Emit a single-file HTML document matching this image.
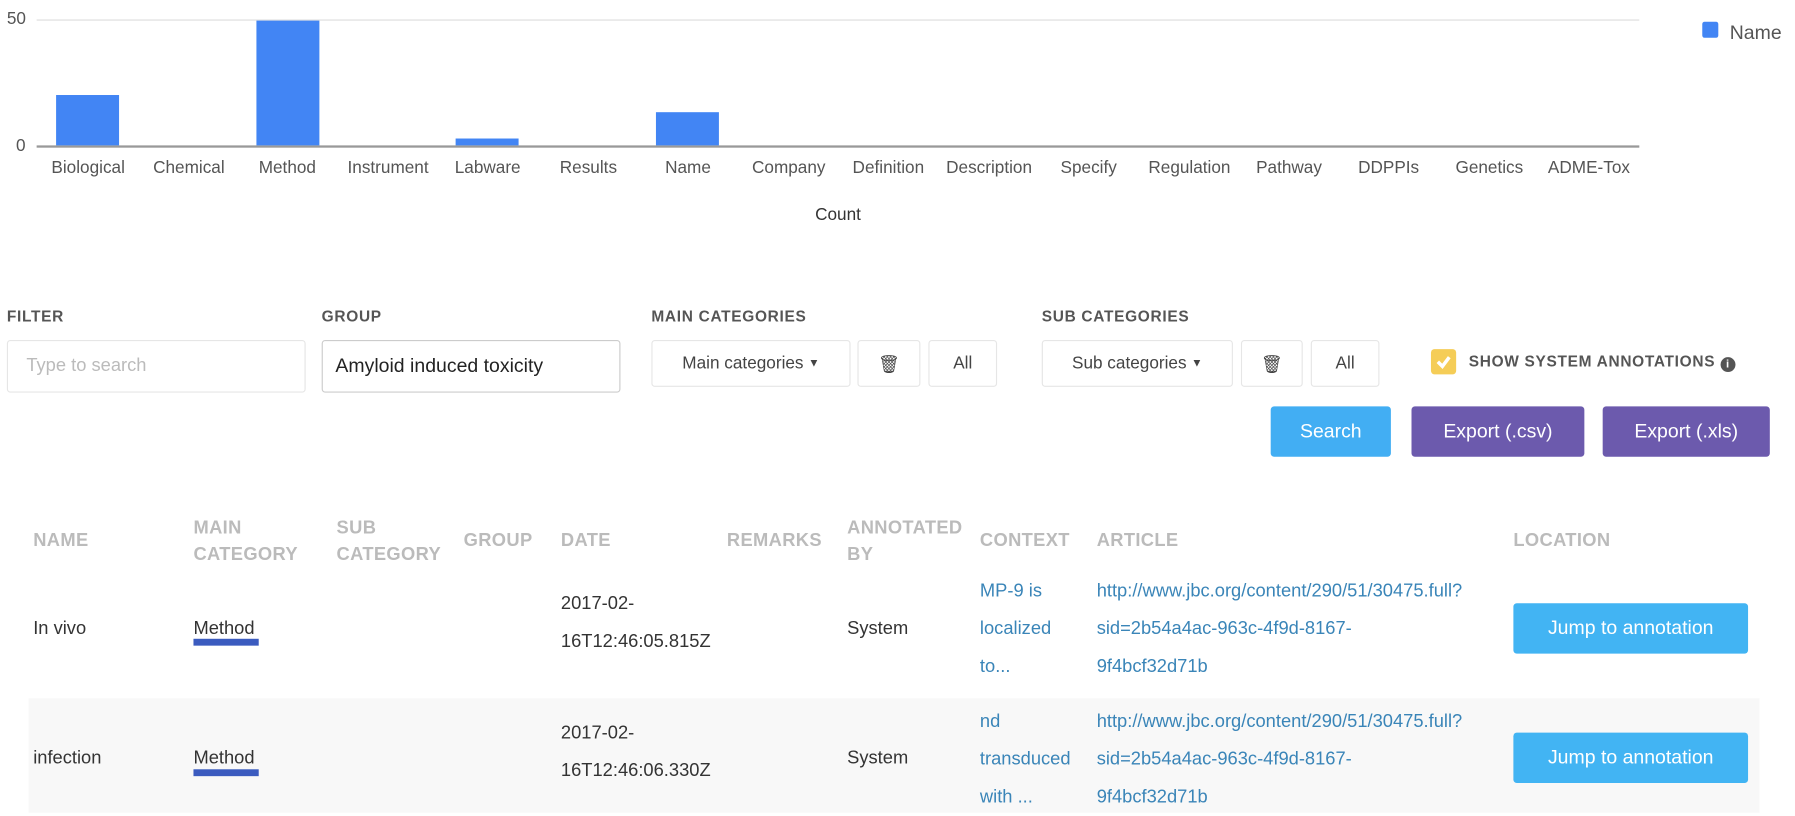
<!DOCTYPE html>
<html><head><meta charset="utf-8"><style>
html,body{margin:0;padding:0;background:#fff;width:1795px;height:812px;overflow:hidden}
#w{position:absolute;left:0;top:0;width:1568px;height:710px;transform:scale(1.14477);transform-origin:0 0;font-family:"Liberation Sans",sans-serif;color:#333}
.a{position:absolute;white-space:nowrap}
.ax{font-size:15px;color:#555}
.lab{font-size:13.5px;font-weight:bold;color:#555;letter-spacing:.6px}
.box{position:absolute;border:1px solid #e6e6e6;border-radius:3px;box-sizing:border-box;display:flex;align-items:center;justify-content:center;font-size:15px;color:#444}
.btn{position:absolute;border-radius:3px;color:#fff;font-size:17px;display:flex;align-items:center;justify-content:center}
.th{position:absolute;font-size:16px;font-weight:bold;color:#bbb;line-height:23px;letter-spacing:.3px}
.td{position:absolute;font-size:16px;color:#333;line-height:33px}
.lk{color:#3a85b8}
</style></head><body><div id="w">
<div class="a ax" style="left:6px;top:8px">50</div>
<div class="a ax" style="left:14px;top:119px">0</div>
<div class="a" style="left:32px;top:17px;width:1400px;height:1px;background:#ddd"></div>
<div class="a" style="left:32px;top:127px;width:1400px;height:2px;background:#999"></div>
<div class="a" style="left:49px;top:83px;width:55px;height:44px;background:#4285f4"></div>
<div class="a" style="left:224px;top:18px;width:55px;height:109px;background:#4285f4"></div>
<div class="a" style="left:398px;top:121px;width:55px;height:6px;background:#4285f4"></div>
<div class="a" style="left:573px;top:98px;width:55px;height:29px;background:#4285f4"></div>
<div class="a ax" style="left:0;top:138px;width:1568px;height:20px">
<span class="a" style="left:77px;transform:translateX(-50%)">Biological</span>
<span class="a" style="left:165px;transform:translateX(-50%)">Chemical</span>
<span class="a" style="left:251px;transform:translateX(-50%)">Method</span>
<span class="a" style="left:339px;transform:translateX(-50%)">Instrument</span>
<span class="a" style="left:426px;transform:translateX(-50%)">Labware</span>
<span class="a" style="left:514px;transform:translateX(-50%)">Results</span>
<span class="a" style="left:601px;transform:translateX(-50%)">Name</span>
<span class="a" style="left:689px;transform:translateX(-50%)">Company</span>
<span class="a" style="left:776px;transform:translateX(-50%)">Definition</span>
<span class="a" style="left:864px;transform:translateX(-50%)">Description</span>
<span class="a" style="left:951px;transform:translateX(-50%)">Specify</span>
<span class="a" style="left:1039px;transform:translateX(-50%)">Regulation</span>
<span class="a" style="left:1126px;transform:translateX(-50%)">Pathway</span>
<span class="a" style="left:1213px;transform:translateX(-50%)">DDPPIs</span>
<span class="a" style="left:1301px;transform:translateX(-50%)">Genetics</span>
<span class="a" style="left:1388px;transform:translateX(-50%)">ADME-Tox</span>
</div>
<div class="a ax" style="left:712px;top:179px;color:#333">Count</div>
<div class="a" style="left:1487px;top:19px;width:14px;height:14px;background:#4285f4;border-radius:2px"></div>
<div class="a" style="left:1511px;top:19px;font-size:17px;color:#555">Name</div>
<div class="a lab" style="left:6px;top:269px">FILTER</div>
<div class="a lab" style="left:281px;top:269px">GROUP</div>
<div class="a lab" style="left:569px;top:269px">MAIN CATEGORIES</div>
<div class="a lab" style="left:910px;top:269px">SUB CATEGORIES</div>
<div class="box" style="left:6px;top:297px;width:261px;height:46px;justify-content:flex-start;padding-left:16px;color:#bbb;font-size:16px">Type to search</div>
<div class="box" style="left:281px;top:297px;width:261px;height:46px;justify-content:flex-start;padding-left:11px;color:#222;font-size:17px;border-color:#ccc">Amyloid induced toxicity</div>
<div class="box" style="left:569px;top:297px;width:174px;height:41px">Main categories&nbsp;<span style="font-size:10px">&#9660;</span></div>
<div class="box" style="left:749px;top:297px;width:55px;height:41px">&#128465;</div>
<div class="box" style="left:811px;top:297px;width:60px;height:41px">All</div>
<div class="box" style="left:910px;top:297px;width:167px;height:41px">Sub categories&nbsp;<span style="font-size:10px">&#9660;</span></div>
<div class="box" style="left:1084px;top:297px;width:54px;height:41px">&#128465;</div>
<div class="box" style="left:1145px;top:297px;width:60px;height:41px">All</div>
<div class="a" style="left:1250px;top:305px;width:22px;height:22px;background:#f5cd57;border-radius:3px"><svg width="22" height="22"><path d="M6 11l4 4 6-8" stroke="#fff" stroke-width="3" fill="none"/></svg></div>
<div class="a lab" style="left:1283px;top:308px;color:#555">SHOW SYSTEM ANNOTATIONS <span style="display:inline-block;width:13px;height:13px;border-radius:50%;background:#555;color:#fff;font-size:10px;text-align:center;line-height:13px;vertical-align:-1px;letter-spacing:0">i</span></div>
<div class="btn" style="left:1110px;top:355px;width:105px;height:44px;background:#42aef3">Search</div>
<div class="btn" style="left:1233px;top:355px;width:151px;height:44px;background:#6c5aad">Export (.csv)</div>
<div class="btn" style="left:1400px;top:355px;width:146px;height:44px;background:#6c5aad">Export (.xls)</div>
<div class="th" style="left:29px;top:461px">NAME</div>
<div class="th" style="left:169px;top:450px">MAIN<br>CATEGORY</div>
<div class="th" style="left:294px;top:450px">SUB<br>CATEGORY</div>
<div class="th" style="left:405px;top:461px">GROUP</div>
<div class="th" style="left:490px;top:461px">DATE</div>
<div class="th" style="left:635px;top:461px">REMARKS</div>
<div class="th" style="left:740px;top:450px">ANNOTATED<br>BY</div>
<div class="th" style="left:856px;top:461px">CONTEXT</div>
<div class="th" style="left:958px;top:461px">ARTICLE</div>
<div class="th" style="left:1322px;top:461px">LOCATION</div>
<div class="a" style="left:25px;top:610px;width:1512px;height:100px;background:#f8f8f8"></div>
<div class="td" style="left:29px;top:533px">In vivo</div>
<div class="td" style="left:169px;top:533px">Method</div>
<div class="a" style="left:169px;top:558px;width:57px;height:6px;background:#3b5bbf"></div>
<div class="td" style="left:490px;top:511px">2017-02-<br>16T12:46:05.815Z</div>
<div class="td" style="left:740px;top:533px">System</div>
<div class="td lk" style="left:856px;top:500px">MP-9 is<br>localized<br>to...</div>
<div class="td lk" style="left:958px;top:500px">http://www.jbc.org/content/290/51/30475.full?<br>sid=2b54a4ac-963c-4f9d-8167-<br>9f4bcf32d71b</div>
<div class="btn" style="left:1322px;top:527px;width:205px;height:44px;background:#42b4f3">Jump to annotation</div>
<div class="td" style="left:29px;top:646px">infection</div>
<div class="td" style="left:169px;top:646px">Method</div>
<div class="a" style="left:169px;top:672px;width:57px;height:6px;background:#3b5bbf"></div>
<div class="td" style="left:490px;top:624px">2017-02-<br>16T12:46:06.330Z</div>
<div class="td" style="left:740px;top:646px">System</div>
<div class="td lk" style="left:856px;top:614px">nd<br>transduced<br>with ...</div>
<div class="td lk" style="left:958px;top:614px">http://www.jbc.org/content/290/51/30475.full?<br>sid=2b54a4ac-963c-4f9d-8167-<br>9f4bcf32d71b</div>
<div class="btn" style="left:1322px;top:640px;width:205px;height:44px;background:#42b4f3">Jump to annotation</div>
</div></body></html>
